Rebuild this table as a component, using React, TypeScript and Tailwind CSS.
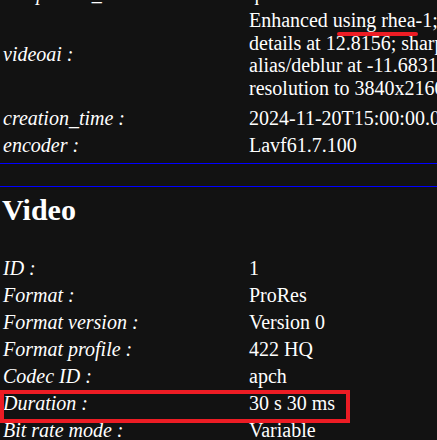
import React from "react";

const serif = { fontFamily: '"Liberation Serif", "Times New Roman", serif' };

function Row({ label, value }: { label: string; value: string }) {
  return (
    <div className="flex items-center py-[2px] leading-[23px] whitespace-nowrap">
      <div className="w-[249px] shrink-0 pl-[3px] italic">{label}</div>
      <div>{value}</div>
    </div>
  );
}

export default function App() {
  const video: [string, string][] = [
    ["ID :", "1"],
    ["Format :", "ProRes"],
    ["Format version :", "Version 0"],
    ["Format profile :", "422 HQ"],
    ["Codec ID :", "apch"],
    ["Duration :", "30 s 30 ms"],
    ["Bit rate mode :", "Variable"],
    ["Bit rate :", "1 657 Mb/s"],
  ];
  return (
    <div
      className="relative w-[437px] h-[440px] overflow-hidden bg-[#121212] text-white text-[20px]"
      style={serif}
    >
      <div className="-mt-[20px]">
        <Row label="compatible_brands :" value="qt" />
        <div className="flex items-center pt-[2px] pb-[5.6px] whitespace-nowrap">
          <div className="w-[249px] shrink-0 pl-[3px] italic leading-[23px]">videoai :</div>
          <div className="leading-[22.6px]">
            <div>Enhanced using rhea-1; mode: auto; revert compression at 0; recover</div>
            <div>details at 12.8156; sharpen at 0; reduce noise at 0; dehalo at 0; anti-</div>
            <div>alias/deblur at -11.6831; focus fix Off; and recover original detail at 20. Changed</div>
            <div>resolution to 3840x2160</div>
          </div>
        </div>
        <Row label="creation_time :" value="2024-11-20T15:00:00.000000Z" />
        <Row label="encoder :" value="Lavf61.7.100" />
        <div className="mt-[4px] h-px bg-[#0000ff]" />
        <div className="mt-[22px] h-px bg-[#0000ff]" />
        <h2 className="mt-[6px] pl-[2px] text-[30px] font-bold leading-[34px]">Video</h2>
        <div className="mt-[28px]">
          {video.map(([l, v]) => (
            <Row key={l} label={l} value={v} />
          ))}
        </div>
      </div>
      <div className="absolute left-[337px] top-[32px] w-[81px] h-[3.5px] rounded-full bg-[#ed1c24]" />
      <div className="absolute left-0 top-[390px] w-[350px] h-[33px] border-[4.5px] border-[#ed1c24]" />
    </div>
  );
}
